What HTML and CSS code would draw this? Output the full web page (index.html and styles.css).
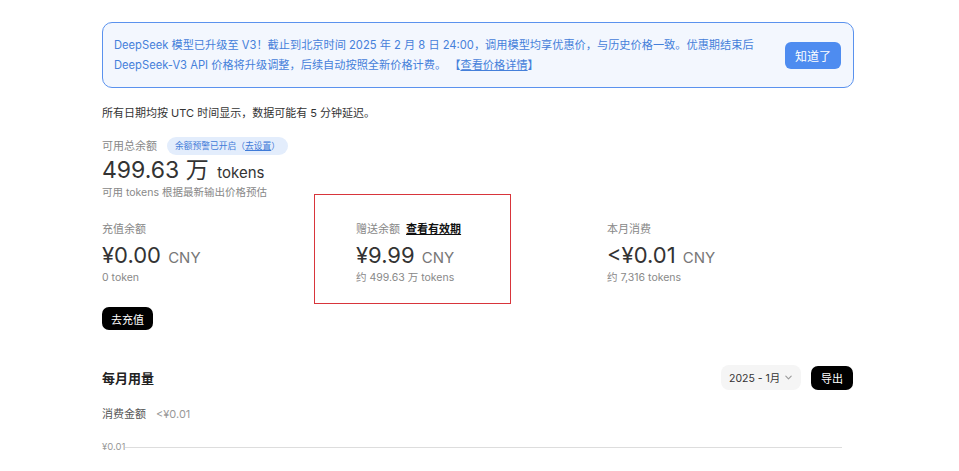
FILE: index.html
```html
<!DOCTYPE html>
<html lang="zh-CN">
<head>
<meta charset="utf-8">
<title>用量信息</title>
<link rel="stylesheet" href="styles.css">
</head>
<body>
<div class="page">
  <div class="banner">
    <div class="banner-text">
      DeepSeek 模型已升级至 V3！截止到北京时间 2025 年 2 月 8 日 24:00，调用模型均享优惠价，与历史价格一致。优惠期结束后<br>
      DeepSeek-V3 API 价格将升级调整，后续自动按照全新价格计费。 【<a class="banner-link" href="#">查看价格详情</a>】
    </div>
    <button class="banner-btn">知道了</button>
  </div>

  <p class="note">所有日期均按 UTC 时间显示，数据可能有 5 分钟延迟。</p>

  <div class="total">
    <div class="total-head">
      <span class="label">可用总余额</span>
      <span class="badge">余额预警已开启（<span class="badge-link">去设置</span>）</span>
    </div>
    <div class="big"><span class="big-num">499.63 万</span> <span class="big-unit">tokens</span></div>
    <div class="sub">可用 tokens 根据最新输出价格预估</div>
  </div>

  <div class="cols">
    <div class="col">
      <div class="label">充值余额</div>
      <div class="amount"><span class="amount-num">¥0.00</span> <span class="amount-unit">CNY</span></div>
      <div class="sub">0 token</div>
    </div>
    <div class="col col-mid">
      <div class="highlight"></div>
      <div class="label">赠送余额 <a class="dark-link" href="#">查看有效期</a></div>
      <div class="amount"><span class="amount-num">¥9.99</span> <span class="amount-unit">CNY</span></div>
      <div class="sub">约 499.63 万 tokens</div>
    </div>
    <div class="col">
      <div class="label">本月消费</div>
      <div class="amount"><span class="amount-num">&lt;¥0.01</span> <span class="amount-unit">CNY</span></div>
      <div class="sub">约 7,316 tokens</div>
    </div>
  </div>

  <button class="btn-black btn-charge">去充值</button>

  <div class="usage-head">
    <h2 class="usage-title">每月用量</h2>
    <div class="usage-actions">
      <div class="select">2025 - 1月
        <svg class="chev" width="9" height="9" viewBox="0 0 10 10"><path d="M2 3.5 L5 6.5 L8 3.5" fill="none" stroke="#999" stroke-width="1.2" stroke-linecap="round" stroke-linejoin="round"/></svg>
      </div>
      <button class="btn-black btn-export">导出</button>
    </div>
  </div>

  <div class="spend"><span class="spend-label">消费金额</span><span class="spend-val">&lt;¥0.01</span></div>

  <div class="axis"><span class="axis-label">¥0.01</span><span class="axis-line"></span></div>
</div>
</body>
</html>
```
FILE: styles.css
```css
* { box-sizing: border-box; }
body {
  margin: 0;
  background: #fff;
  font-family: Inter, "Noto Sans CJK SC", sans-serif;
  color: #333;
}
.page {
  width: 752px;
  margin-left: 102px;
  padding-top: 22px;
}
.banner {
  display: flex;
  align-items: center;
  justify-content: space-between;
  border: 1.5px solid #5a92ee;
  background: #f3f7fe;
  border-radius: 10px;
  padding: 12px 12px 12px 11px;
  height: 66px;
}
.banner-text {
  font-size: 11.2px;
  line-height: 20px;
  color: #4580da;
}
.banner-link { color: #4580da; text-decoration: underline; }
.banner-btn {
  border: 0;
  background: #4e8cf0;
  color: #fff;
  font-family: inherit;
  font-size: 12px;
  width: 56px;
  height: 27px;
  border-radius: 6px;
  padding: 0;
}
.note {
  margin: 17px 0 0;
  font-size: 11px;
  line-height: 16px;
  color: #333;
}
.total { margin-top: 16px; }
.total-head {
  display: flex;
  align-items: center;
  height: 18px;
}
.label {
  font-size: 11px;
  line-height: 16px;
  color: #888;
}
.badge {
  margin-left: 10px;
  background: #e3edfc;
  color: #3f7bd8;
  font-size: 8.75px;
  height: 18px;
  line-height: 18px;
  padding: 0 8px;
  border-radius: 9px;
}
.badge-link { text-decoration: underline; }
.big {
  margin-top: 1px;
  font-size: 23px;
  line-height: 28px;
  color: #333;
}
.big-unit { font-size: 15px; line-height: 1; margin-left: 2px; }
.sub {
  margin-top: 2px;
  font-size: 10.5px;
  line-height: 14px;
  color: #888;
}
.cols {
  display: grid;
  grid-template-columns: 254px 251px 1fr;
  margin-top: 21px;
}
.col { position: relative; }
.highlight {
  position: absolute;
  left: -42px;
  top: -27px;
  width: 197px;
  height: 110px;
  border: 1.5px solid #d8353b;
}
.dark-link {
  color: #111;
  font-weight: 600;
  text-decoration: underline;
  margin-left: 3px;
}
.amount {
  margin-top: 4px;
  font-size: 22px;
  line-height: 28px;
  color: #333;
}
.amount-unit { font-size: 15px; line-height: 1; color: #777; margin-left: 1px; }
.btn-black {
  border: 0;
  background: #000;
  color: #fff;
  font-family: inherit;
  font-size: 11px;
  padding: 0;
  border-radius: 7px;
}
.btn-charge {
  display: block;
  margin-top: 22px;
  width: 51px;
  height: 23px;
}
.usage-head {
  display: flex;
  align-items: center;
  justify-content: space-between;
  margin-top: 35px;
  height: 25px;
}
.usage-title {
  margin: 0;
  font-size: 13px;
  font-weight: 700;
  color: #222;
}
.usage-actions {
  display: flex;
  align-items: center;
  gap: 10px;
}
.select {
  display: flex;
  align-items: center;
  justify-content: space-between;
  width: 80px;
  height: 25px;
  padding: 0 8px 0 8px;
  background: #f5f5f5;
  border-radius: 8px;
  font-size: 10.5px;
  color: #333;
}
.btn-export {
  width: 42px;
  height: 24px;
  margin-right: 1px;
}
.spend {
  margin-top: 16px;
  font-size: 11px;
  line-height: 16px;
}
.spend-label { color: #555; }
.spend-val { color: #999; margin-left: 10px; }
.axis {
  display: flex;
  align-items: center;
  margin-top: 18px;
  width: 740px;
}
.axis-label {
  font-size: 9.5px;
  line-height: 14px;
  color: #999;
}
.axis-line {
  flex: 1;
  height: 1px;
  background: #ddd;
}
```
